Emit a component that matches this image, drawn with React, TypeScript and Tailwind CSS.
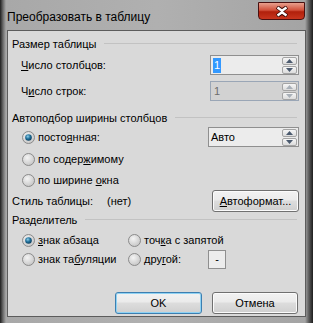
import React from 'react'

const font = { fontFamily: '"Liberation Sans", "Noto Sans", sans-serif' }

function Radio({ checked }: { checked?: boolean }) {
  return (
    <svg width="13" height="13" viewBox="0 0 13 13" className="shrink-0">
      <defs>
        <radialGradient id="rg" cx="40%" cy="35%" r="70%">
          <stop offset="0" stopColor="#f4f4f4" />
          <stop offset="1" stopColor="#c4c4c4" />
        </radialGradient>
        <radialGradient id="dot" cx="40%" cy="35%" r="70%">
          <stop offset="0" stopColor="#8fd0ea" />
          <stop offset="0.5" stopColor="#1f6f9a" />
          <stop offset="1" stopColor="#0c3a56" />
        </radialGradient>
      </defs>
      <circle cx="6.5" cy="6.5" r="6" fill="url(#rg)" stroke="#8a8a8a" strokeWidth="1" />
      {checked && <circle cx="6.5" cy="6.5" r="3.3" fill="url(#dot)" />}
    </svg>
  )
}

function SpinArrows({ disabled }: { disabled?: boolean }) {
  const c = disabled ? '#a9b0b8' : '#4b5a6e'
  return (
    <div className="flex flex-col gap-[1px] mr-[1px]">
      <div className="w-[15px] h-[8px] border border-[#a4a4a4] rounded-[2px] bg-[linear-gradient(#f6f6f6,#dcdcdc)] flex items-center justify-center">
        <svg width="7" height="4" viewBox="0 0 7 4"><path d="M0 4 L3.5 0 L7 4 Z" fill={c} /></svg>
      </div>
      <div className="w-[15px] h-[8px] border border-[#a4a4a4] rounded-[2px] bg-[linear-gradient(#f6f6f6,#dcdcdc)] flex items-center justify-center">
        <svg width="7" height="4" viewBox="0 0 7 4"><path d="M0 0 L3.5 4 L7 0 Z" fill={c} /></svg>
      </div>
    </div>
  )
}

function Header({ children }: { children: React.ReactNode }) {
  return (
    <div className="h-[14px] flex items-center">
      <span className="pl-[4px] pr-[8px] whitespace-nowrap">{children}</span>
      <div className="flex-1 h-[2px] border-t border-[#c2c2c2] border-b-white mr-[2px]" />
    </div>
  )
}

function Button({ children, primary, w }: { children: React.ReactNode; primary?: boolean; w: string }) {
  return (
    <div
      className={`${w} h-[22px] rounded-[3px] border flex items-center justify-center bg-[linear-gradient(#f2f2f2_0%,#ebebeb_45%,#dddddd_50%,#cfcfcf_100%)] ${
        primary ? 'border-[#3c7fb1] shadow-[inset_0_0_0_1px_#8fd2f3]' : 'border-[#707070] shadow-[inset_0_0_0_1px_#fbfbfb]'
      }`}
    >
      {children}
    </div>
  )
}

export default function App() {
  return (
    <div
      className="w-[313px] h-[323px] relative text-[11px] text-black whitespace-nowrap bg-[linear-gradient(to_right,#1e1e1e_0px,#6a6a6a_3px,#a8a8a8_6px,#b0b0b0_50%,#a4a4a4_305px,#5a5a5a_309px,#1e1e1e_313px)]"
      style={font}
    >
      {/* title bar */}
      <div className="h-[30px] flex items-start">
        <div className="pl-[7px] pt-[8px] text-[12px] text-black">Преобразовать в таблицу</div>
        <div className="ml-auto mr-[8px] mt-[2px] w-[47px] h-[18px] rounded-b-[4px] border border-[#4a1010] bg-[linear-gradient(#e8a08e_0%,#d2503a_45%,#b1200c_55%,#c8351e_100%)] flex items-center justify-center">
          <svg width="14" height="11" viewBox="0 0 14 11">
            <path d="M2 1 L7 4.5 L12 1 M2 10 L7 6.5 L12 10" stroke="#3a0a06" strokeWidth="4" fill="none" />
            <path d="M2.5 1.5 L7 4.8 L11.5 1.5 M2.5 9.5 L7 6.2 L11.5 9.5" stroke="#ffffff" strokeWidth="2.4" fill="none" />
          </svg>
        </div>
      </div>

      {/* client area */}
      <div className="absolute left-[7px] top-[30px] w-[299px] h-[287px] border border-[#5c5c5c] bg-[#d9d9d9] flex flex-col pt-[6px] pr-[6px]">
        <Header>Размер таблицы</Header>

        <div className="mt-[4px] h-[20px] flex items-center">
          <span className="pl-[13px]"><u>Ч</u>исло столбцов:</span>
          <div className="ml-auto w-[89px] h-[20px] border border-[#8f8f8f] bg-[#ececec] flex items-center">
            <span className="ml-[2px] px-[1px] bg-[#3399ff] text-white leading-[15px]">1</span>
            <div className="ml-auto"><SpinArrows /></div>
          </div>
        </div>

        <div className="mt-[6px] h-[20px] flex items-center">
          <span className="pl-[13px]">Ч<u>и</u>сло строк:</span>
          <div className="ml-auto w-[89px] h-[20px] border border-[#9aa6b6] bg-[#d2d2d2] flex items-center">
            <span className="ml-[3px] text-[#6d6d6d]">1</span>
            <div className="ml-auto"><SpinArrows disabled /></div>
          </div>
        </div>

        <div className="mt-[10px]">
          <Header>Автоподбор ширины столбцов</Header>
        </div>

        <div className="mt-[2px] h-[20px] flex items-center">
          <div className="pl-[14px] flex items-center gap-[3px]">
            <Radio checked />
            <span>посто<u>я</u>нная:</span>
          </div>
          <div className="ml-auto w-[91px] h-[20px] border border-[#8f8f8f] bg-[#ececec] flex items-center">
            <span className="ml-[2px]">Авто</span>
            <div className="ml-auto"><SpinArrows /></div>
          </div>
        </div>

        <div className="mt-[2px] h-[20px] flex items-center pl-[14px] gap-[3px]">
          <Radio />
          <span>по содер<u>ж</u>имому</span>
        </div>

        <div className="mt-[2px] h-[19px] flex items-center pl-[14px] gap-[3px]">
          <Radio />
          <span>по ширине <u>о</u>кна</span>
        </div>

        <div className="h-[22px] flex items-center">
          <span className="pl-[4px]">Стиль таблицы:</span>
          <span className="ml-[14px]">(нет)</span>
          <div className="ml-auto">
            <Button w="w-[87px]"><span><u>А</u>втоформат...</span></Button>
          </div>
        </div>

        <div className="mt-[1px]">
          <Header>Разделитель</Header>
        </div>

        <div className="mt-[4px] h-[18px] flex items-center">
          <div className="pl-[14px] w-[120px] flex items-center gap-[3px]">
            <Radio checked />
            <span><u>з</u>нак абзаца</span>
          </div>
          <div className="flex items-center gap-[3px]">
            <Radio />
            <span>точ<u>к</u>а с запятой</span>
          </div>
        </div>

        <div className="h-[20px] flex items-center">
          <div className="pl-[14px] w-[120px] flex items-center gap-[3px]">
            <Radio />
            <span>знак та<u>б</u>уляции</span>
          </div>
          <div className="w-[80px] flex items-center gap-[3px]">
            <Radio />
            <span>дру<u>г</u>ой:</span>
          </div>
          <div className="w-[18px] h-[19px] border border-[#8f8f8f] bg-[#ececec] flex items-center justify-center">
            -
          </div>
        </div>

        <div className="mt-auto mb-[2px] flex justify-end gap-[10px] pr-[1px]">
          <Button primary w="w-[87px]">OK</Button>
          <Button w="w-[86px]">Отмена</Button>
        </div>
      </div>
    </div>
  )
}
